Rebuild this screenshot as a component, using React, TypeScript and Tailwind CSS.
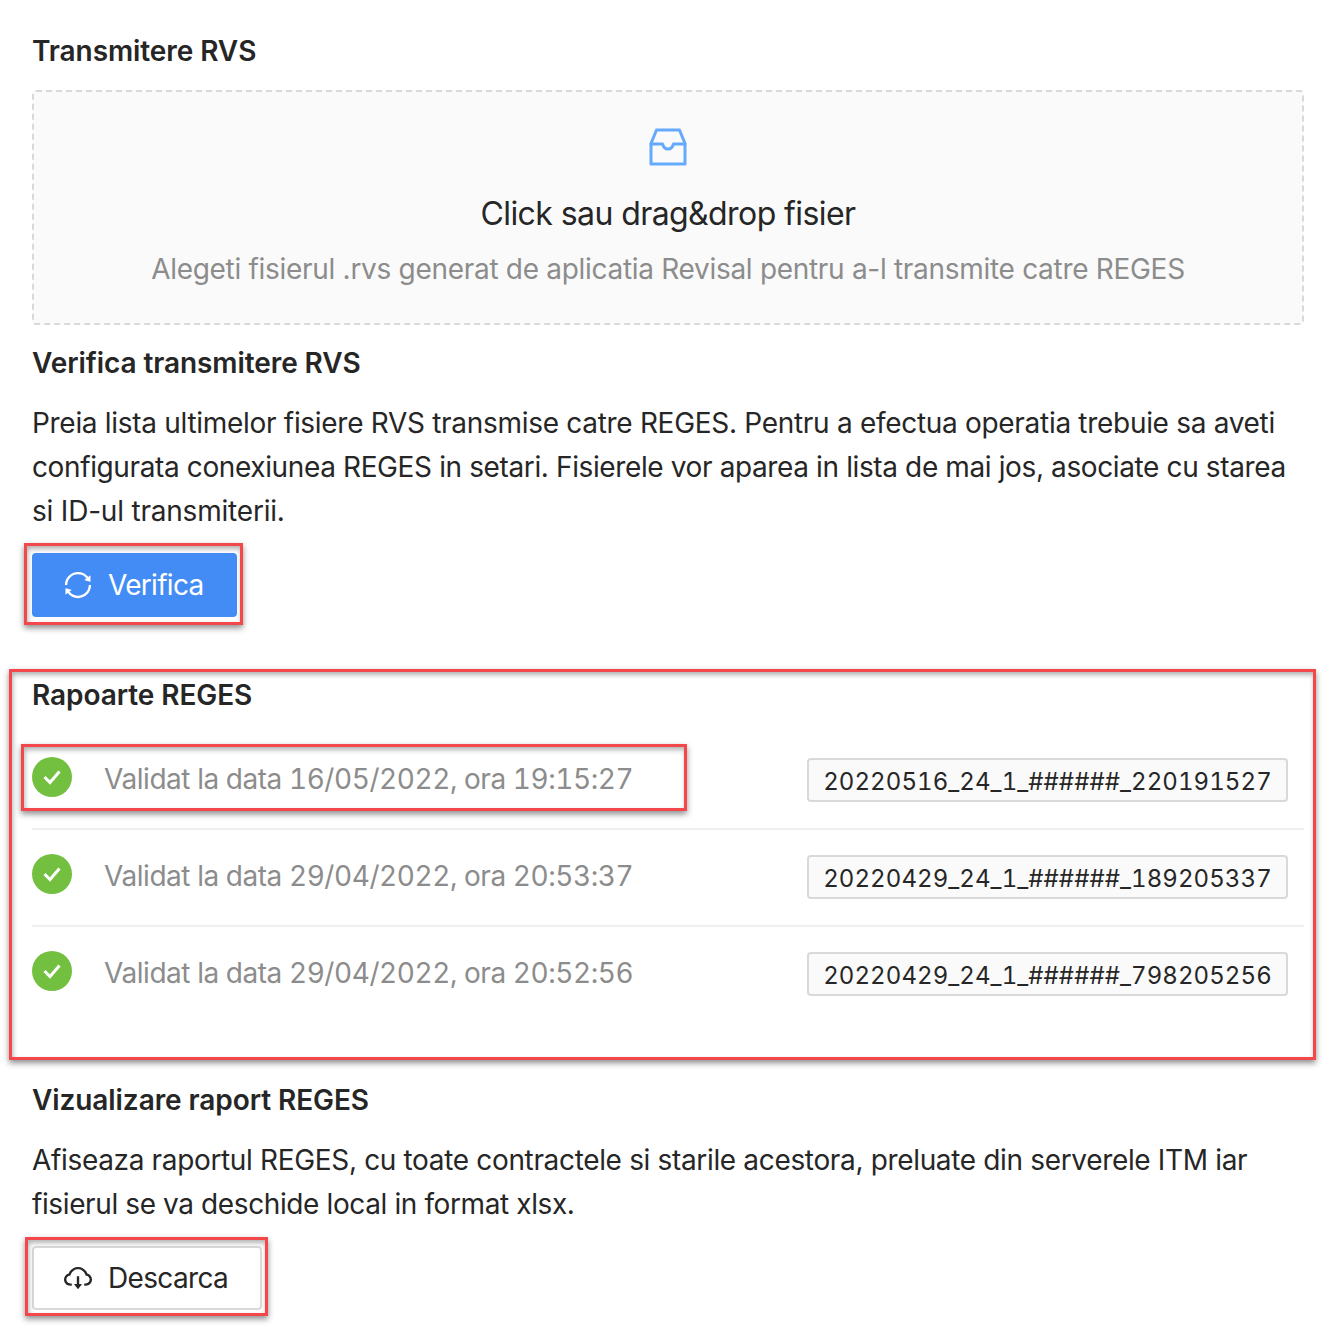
import React from 'react';
import { AiOutlineCloudDownload, AiOutlineSync } from 'react-icons/ai';

const reports = [
    { text: 'Validat la data 16/05/2022, ora 19:15:27', id: '20220516_24_1_######_220191527', marked: true },
    { text: 'Validat la data 29/04/2022, ora 20:53:37', id: '20220429_24_1_######_189205337', marked: false },
    { text: 'Validat la data 29/04/2022, ora 20:52:56', id: '20220429_24_1_######_798205256', marked: false },
];

const Heading: React.FC<{ children: React.ReactNode }> = ({ children }) => (
    <h5 className="text-[28px] leading-[42px] font-semibold text-[#262626] tracking-[-0.08px]">{children}</h5>
);

const InboxIcon = () => (
    <svg width="38" height="38" viewBox="0 0 38 38" fill="none" stroke="#64a9fb" strokeWidth="3" strokeLinejoin="round" strokeLinecap="round">
        <path d="M2 15.500 7.500 2h23L36 15.500V36H2z" />
        <path d="M2 16h11.500c1 3.500 2.500 5 5.500 5s4.500-1.500 5.500-5H36" />
    </svg>
);

const CheckCircle = () => (
    <svg width="40" height="40" viewBox="0 0 40 40" className="shrink-0 mb-1">
        <circle cx="20" cy="20" r="20" fill="#73c040" />
        <path d="M12.500 20 18 25.500 27.500 14.500" fill="none" stroke="#fff" strokeWidth="3" />
    </svg>
);

const Marker: React.FC<{ className: string }> = ({ className }) => (
    <div className={`absolute pointer-events-none border-[3px] border-[#f4474b] shadow-[0_3px_6px_rgba(0,0,0,0.45),inset_1px_3px_5px_rgba(0,0,0,0.3)] ${className}`} />
);

const App: React.FC = () => {
    return (
        <div className="w-[1330px] h-[1342px] overflow-hidden bg-white pl-8 pr-[26px] pt-[30px] font-['Inter','Liberation_Sans',sans-serif] text-[#262626]">
            <Heading>Transmitere RVS</Heading>
            <div className="mt-[18px] h-[235px] border-2 border-dashed border-[#d9d9d9] rounded-[4px] bg-[#fafafa] flex flex-col items-center pt-[36px]">
                <InboxIcon />
                <p className="mt-[26px] text-[32px] leading-[44px] text-[#262626] tracking-[-0.58px]">Click sau drag&amp;drop fisier</p>
                <p className="mt-[11px] text-[28px] leading-[44px] text-[#8c8c8c] tracking-[-0.3px]">
                    Alegeti fisierul .rvs generat de aplicatia Revisal pentru a-l transmite catre REGES
                </p>
            </div>

            <div className="mt-[17px]">
                <Heading>Verifica transmitere RVS</Heading>
            </div>
            <p className="mt-[17px] text-[28px] leading-[44px]">
                <span className="block whitespace-nowrap tracking-[-0.3px]">Preia lista ultimelor fisiere RVS transmise catre REGES. Pentru a efectua operatia trebuie sa aveti</span>
                <span className="block whitespace-nowrap tracking-[-0.38px]">configurata conexiunea REGES in setari. Fisierele vor aparea in lista de mai jos, asociate cu starea</span>
                <span className="block whitespace-nowrap tracking-[-0.2px]">si ID-ul transmiterii.</span>
            </p>
            <div className="relative mt-[20px] w-fit">
                <button className="h-16 w-[205px] flex items-center pl-[30px] gap-[14px] rounded-[4px] bg-[#438cf6] text-white text-[28px] tracking-[-0.7px]">
                    <AiOutlineSync size={32} />
                    <span>Verifica</span>
                </button>
                <Marker className="-left-2 -top-2.5 -right-1.5 -bottom-2" />
            </div>

            <div className="relative mt-[57px]">
                <Heading>Rapoarte REGES</Heading>
                <ul className="mt-[17px]">
                    {reports.map((report, i) => (
                        <li key={report.id} className={`h-[97px] flex items-center justify-between pr-4 border-b-2 ${i < 2 ? 'border-[#f0f0f0]' : 'border-transparent'}`}>
                            <div className="relative flex items-center gap-8 -mt-[3px]">
                                <CheckCircle />
                                <span className="text-[28px] leading-[44px] text-[#8c8c8c] tabular-nums tracking-[-0.45px]">{report.text}</span>
                                {report.marked && <Marker className="-left-[11px] -top-[13px] -right-[54px] -bottom-[10px]" />}
                            </div>
                            <span className="h-11 w-[481px] -mt-px pt-[3px] flex items-center justify-center border-2 border-[#d9d9d9] rounded-[4px] bg-[#fafafa] text-[24px] tabular-nums tracking-[0.08px] text-[#262626]">
                                {report.id}
                            </span>
                        </li>
                    ))}
                </ul>
                <Marker className="-left-[23px] -top-[5px] -right-[12px] -bottom-[36px]" />
            </div>

            <div className="mt-[55px]">
                <Heading>Vizualizare raport REGES</Heading>
            </div>
            <p className="mt-[17px] text-[28px] leading-[44px]">
                <span className="block whitespace-nowrap tracking-[-0.34px]">Afiseaza raportul REGES, cu toate contractele si starile acestora, preluate din serverele ITM iar</span>
                <span className="block whitespace-nowrap tracking-[-0.39px]">fisierul se va deschide local in format xlsx.</span>
            </p>
            <div className="relative mt-[20px] w-fit">
                <button className="h-16 w-[230px] flex items-center pl-[28px] gap-[14px] rounded-[4px] bg-white border-2 border-[#d9d9d9] text-[#262626] text-[28px] tracking-[-0.65px]">
                    <AiOutlineCloudDownload size={32} />
                    <span>Descarca</span>
                </button>
                <Marker className="-left-[7px] -top-[9px] -right-[6px] -bottom-[6px]" />
            </div>
        </div>
    );
};

export default App;
